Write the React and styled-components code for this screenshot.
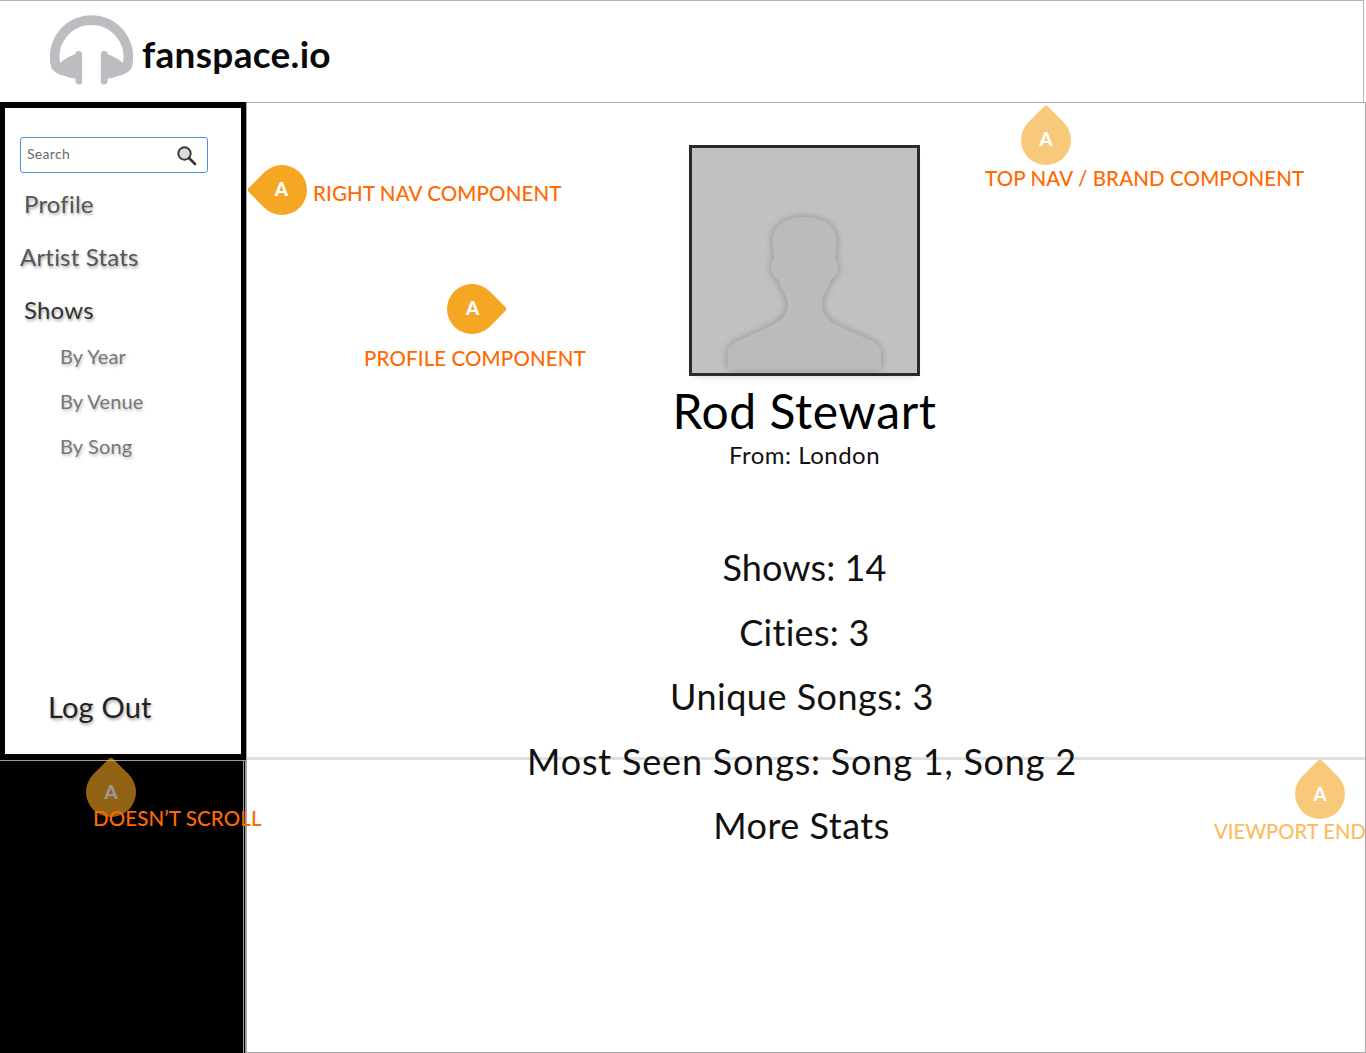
import React from "react";
import styled, { createGlobalStyle } from "styled-components";

const Global = createGlobalStyle`
  html, body {
    margin: 0;
    padding: 0;
    background: #fff;
    font-family: Lato, "Noto Sans", sans-serif;
  }
`;

const Page = styled.div`
  position: relative;
  width: 1366px;
  height: 1053px;
  overflow: hidden;
  display: flex;
  flex-direction: column;
`;

const TopNav = styled.header`
  box-sizing: border-box;
  width: 1364px;
  height: 102px;
  flex: none;
  border-top: 1px solid #b4b4b4;
  border-right: 1px solid #b4b4b4;
  padding-left: 50px;
  display: flex;
  align-items: center;
  gap: 10px;
`;

const Brand = styled.div`
  font-size: 37px;
  font-weight: 700;
  color: #0a0a0a;
  letter-spacing: 0.3px;
  margin-top: 3px;
  margin-left: -1px;
`;

const Logo = styled.svg`
  width: 83px;
  height: 72px;
  margin-bottom: 5px;
`;

const Body = styled.div`
  flex: 1;
  display: flex;
  min-height: 0;
`;

const Side = styled.aside`
  width: 246px;
  flex: none;
  display: flex;
  flex-direction: column;
  background: #000;
`;

const SidePanel = styled.nav`
  box-sizing: border-box;
  height: 658px;
  flex: none;
  background: #fff;
  border: solid #000;
  border-width: 6px 5px 6px 5px;
  padding: 29px 0 0 15px;
  display: flex;
  flex-direction: column;
`;

const SideRest = styled.div`
  flex: 1;
  border-top: 1px solid #9a9a9a;
  border-right: 1px solid #9a9a9a;
  background: linear-gradient(90deg, #000 243px, #9a9a9a 243px, #9a9a9a 244px, #000 244px);
`;

const SearchBox = styled.div`
  box-sizing: border-box;
  width: 188px;
  height: 36px;
  border: 1px solid #4a90e2;
  border-radius: 3px;
  display: flex;
  align-items: center;
  justify-content: space-between;
  padding: 0 10px 0 6px;
  font-size: 14px;
  color: #6a6a6a;
  letter-spacing: 0.3px;
  margin-bottom: 4px;
`;

const SearchLabel = styled.span`
  margin-bottom: 3px;
`;

const NavLink = styled.div`
  height: 53px;
  line-height: 53px;
  margin-left: ${(p) => p.$x}px;
  font-size: ${(p) => p.$size}px;
  color: ${(p) => p.$color};
  text-shadow: 1px 2px 3px rgba(0, 0, 0, 0.35);
  letter-spacing: 0.2px;
  white-space: nowrap;
`;

const SubList = styled.div`
  margin-top: -2px;
`;

const SubLink = styled.div`
  height: 45px;
  line-height: 45px;
  margin-left: 40px;
  font-size: 20px;
  color: #777;
  text-shadow: 1px 2px 3px rgba(0, 0, 0, 0.25);
  letter-spacing: 0.15px;
`;

const LogOut = styled(NavLink)`
  margin-top: auto;
  margin-bottom: 21px;
`;

const Main = styled.main`
  position: relative;
  box-sizing: border-box;
  flex: 1;
  border: 1px solid #a8a8a8;
  display: flex;
  flex-direction: column;
  align-items: center;
  padding-top: 42px;
  padding-right: 3px;
`;

const ViewportLine = styled.div`
  position: absolute;
  left: 0;
  right: 0;
  top: 654px;
  height: 3px;
  background: #e0e0e0;
`;

const Avatar = styled.div`
  box-sizing: border-box;
  width: 231px;
  height: 231px;
  margin-bottom: 1px;
  border: 3px solid #2a2a2a;
  background: #c2c2c2;
  box-shadow: 0 5px 8px -5px rgba(0, 0, 0, 0.2);
`;

const AvatarArt = styled.svg`
  display: block;
  width: 100%;
  height: 100%;
`;

const Name = styled.h1`
  margin: 4px 0 0;
  font-size: 48px;
  line-height: 60px;
  font-weight: 400;
  color: #000;
  letter-spacing: 0.55px;
`;

const From = styled.div`
  font-size: 24px;
  line-height: 28px;
  font-weight: 400;
  color: #111;
  letter-spacing: 0.5px;
  margin-bottom: 66px;
`;

const Stat = styled.div`
  position: relative;
  font-size: 36px;
  line-height: 64.5px;
  font-weight: 400;
  color: #111;
  letter-spacing: ${(p) => p.$track ?? 0.5}px;
  margin-right: ${(p) => p.$nudge || 0}px;
  white-space: nowrap;
`;

const Pin = styled.div`
  position: absolute;
  left: ${(p) => p.$cx - 25}px;
  top: ${(p) => p.$cy - 25}px;
  width: 50px;
  height: 50px;
  background: #f5a623;
  opacity: ${(p) => p.$fade || 1};
  border-radius: 50% 50% 50% 3px;
  transform: rotate(${(p) => p.$angle}deg);
  display: flex;
  align-items: center;
  justify-content: center;
`;

const PinLetter = styled.span`
  font-size: 19px;
  font-weight: 900;
  color: #fff;
  transform: rotate(${(p) => -p.$angle}deg) translateY(${(p) => -p.$lift}px);
`;

const Note = styled.div`
  position: absolute;
  left: ${(p) => p.$x}px;
  top: ${(p) => p.$y}px;
  font-size: ${(p) => (p.$pale ? 20.2 : 20.5)}px;
  line-height: 24px;
  font-weight: 500;
  letter-spacing: ${(p) => (p.$pale ? 0 : 0.12)}px;
  white-space: nowrap;
  color: ${(p) => (p.$pale ? "#fcbc62" : "#ff6a00")};
`;

function HeadphoneLogo() {
  return (
    <Logo viewBox="150 45 248 214">
      <path d="M168 205 A110 110 0 1 1 380 205" fill="none" stroke="#bcbdc0" strokeWidth="29" />
      <g fill="#bcbdc0">
        <path d="M246 168 Q246 158 236 158 L227 160 L226 168 Q200 176 178 196 L153 208 Q168 228 192 232 Q210 240 226 240 L226 250 Q228 258 238 258 Q246 258 246 250 Z" />
        <path d="M302 168 Q302 158 312 158 L321 160 L322 168 Q348 176 370 196 L395 208 Q380 228 356 232 Q338 240 322 240 L322 250 Q320 258 310 258 Q302 258 302 250 Z" />
      </g>
    </Logo>
  );
}

function SearchGlass() {
  return (
    <svg width="21" height="21" viewBox="0 0 21 21">
      <circle cx="8.5" cy="8.5" r="6.2" fill="#dcdcdc" stroke="#3a3a3a" strokeWidth="2" />
      <path d="M13 13 L19 19" stroke="#333" strokeWidth="2.6" strokeLinecap="round" />
    </svg>
  );
}

const silhouettePath =
  "M198 725 L198 665 C205 640 260 625 310 600 C360 578 385 560 382 520 C378 495 362 480 354 450 C338 445 330 425 331 405 C332 395 338 390 340 388 L335 330 C338 280 380 258 430 258 C485 258 530 280 532 330 L527 388 C535 395 538 410 535 425 C532 440 520 448 514 450 C505 480 488 495 486 520 C486 560 510 580 560 600 C610 625 660 640 668 665 L668 725 Z";

function Silhouette() {
  return (
    <AvatarArt viewBox="90 47 687 688">
      <defs>
        <filter id="blur" x="-20%" y="-20%" width="140%" height="140%">
          <feGaussianBlur stdDeviation="13" />
        </filter>
      </defs>
      <path filter="url(#blur)" fill="#8e8e8e" d={silhouettePath} />
      <path fill="#babbbd" d={silhouettePath} />
    </AvatarArt>
  );
}

// angle: 45 = tip left, 135 = tip top, 225 = tip right
function Marker({ cx, cy, angle, fade, lift = 1.5 }) {
  return (
    <Pin $cx={cx} $cy={cy} $angle={angle} $fade={fade}>
      <PinLetter $angle={angle} $lift={lift}>A</PinLetter>
    </Pin>
  );
}

export default function App() {
  return (
    <Page>
      <Global />
      <TopNav>
        <HeadphoneLogo />
        <Brand>fanspace.io</Brand>
      </TopNav>
      <Body>
        <Side>
          <SidePanel>
            <SearchBox>
              <SearchLabel>Search</SearchLabel>
              <SearchGlass />
            </SearchBox>
            <NavLink $x={4} $size={24} $color="#555">Profile</NavLink>
            <NavLink $x={0} $size={24} $color="#555">Artist Stats</NavLink>
            <NavLink $x={4} $size={24} $color="#333">Shows</NavLink>
            <SubList>
              <SubLink>By Year</SubLink>
              <SubLink>By Venue</SubLink>
              <SubLink>By Song</SubLink>
            </SubList>
            <LogOut $x={28} $size={29} $color="#222">Log Out</LogOut>
          </SidePanel>
          <SideRest />
        </Side>
        <Main>
          <ViewportLine />
          <Avatar>
            <Silhouette />
          </Avatar>
          <Name>Rod Stewart</Name>
          <From>From: London</From>
          <Stat $track={0.1}>Shows: 14</Stat>
          <Stat $track={0.3}>Cities: 3</Stat>
          <Stat $nudge={5}>Unique Songs: 3</Stat>
          <Stat $nudge={5} $track={0.8}>Most Seen Songs: Song 1, Song 2</Stat>
          <Stat $nudge={6}>More Stats</Stat>
        </Main>
      </Body>

      <Marker cx={282} cy={190} angle={45} />
      <Note $x={313} $y={181}>RIGHT NAV COMPONENT</Note>
      <Marker cx={472} cy={309} angle={225} />
      <Note $x={364} $y={346}>PROFILE COMPONENT</Note>
      <Marker cx={1046} cy={140} angle={135} fade={0.6} lift={0.5} />
      <Note $x={985} $y={166}>TOP NAV / BRAND COMPONENT</Note>
      <Marker cx={111} cy={792} angle={135} fade={0.6} lift={0} />
      <Note $x={93} $y={806}>DOESN’T SCROLL</Note>
      <Marker cx={1320} cy={794} angle={135} fade={0.6} lift={0} />
      <Note $x={1214} $y={819} $pale>VIEWPORT END</Note>
    </Page>
  );
}
